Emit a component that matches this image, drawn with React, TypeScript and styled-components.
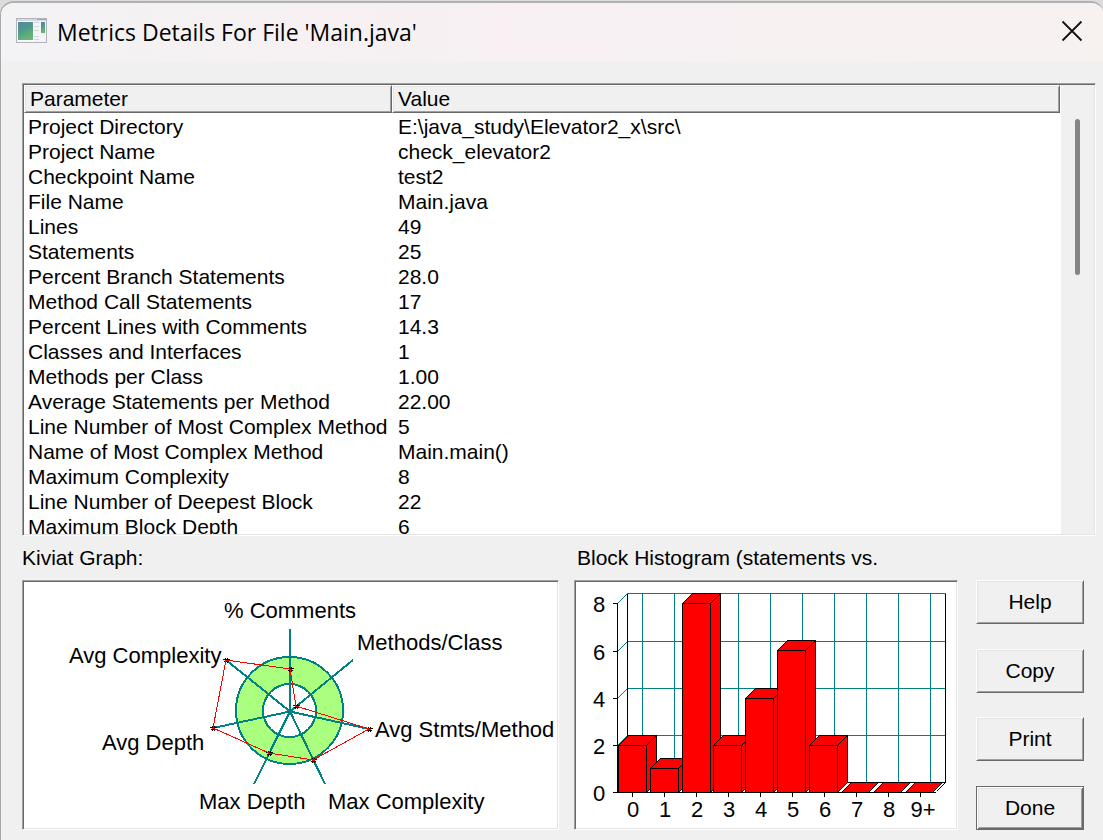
import React from 'react';
import styled, { createGlobalStyle, css } from 'styled-components';

const sans = '"Liberation Sans", Arial, sans-serif';

const GlobalStyle = createGlobalStyle`
  * { box-sizing: border-box; }
  body { margin: 0; background: #dcdcdc; }
`;

const sunken = css`
  border: 1px solid;
  border-color: #a0a0a0 #fff #fff #a0a0a0;
  box-shadow: inset 1px 1px #696969, inset -1px -1px #e3e3e3;
  padding: 1px;
`;

const raised = css`
  border: 1px solid;
  border-color: #fff #696969 #696969 #fff;
  box-shadow: inset 1px 1px #e3e3e3, inset -1px -1px #a0a0a0;
`;

const Screen = styled.div`
  height: 100vh;
  min-height: 600px;
  padding-top: 1px;
  display: flex;
`;

const Dialog = styled.main`
  flex: 1;
  min-width: 0;
  display: flex;
  flex-direction: column;
  background: #f0f0f0;
  border-top: 2px solid #b0b0b0;
  border-left: 1px solid #a8a8a8;
  border-radius: 14px 12px 0 0;
  overflow: hidden;
  font-family: ${sans};
  font-size: 21px;
  color: #000;
`;

const TitleBar = styled.header`
  flex: none;
  height: 58px;
  padding: 0 20px 2px 15px;
  display: flex;
  align-items: center;
  gap: 10px;
  background: linear-gradient(90deg, #f3f2f4, #f8f0f3 45%, #f7f1f0);
`;

const Title = styled.h1`
  flex: 1;
  margin: 0;
  padding-top: 2px;
  font: 400 23px/30px "Open Sans", "Noto Sans", sans-serif;
`;

const CloseButton = styled.button`
  display: flex;
  padding: 0;
  border: 0;
  background: none;
`;

const Body = styled.div`
  flex: 1;
  min-height: 0;
  padding: 22px 7px 10px 21px;
  display: flex;
  flex-direction: column;
`;

const ListBox = styled.section`
  ${sunken}
  flex: 1;
  min-height: 0;
  display: flex;
  background: #fff;
`;

const ListView = styled.div`
  flex: 1;
  min-width: 0;
  overflow: hidden;
`;

const Table = styled.table`
  width: 100%;
  table-layout: fixed;
  border-collapse: separate;
  border-spacing: 0;
`;

const HeadCell = styled.th<{ $width?: number }>`
  ${raised}
  width: ${(p) => (p.$width ? `${p.$width}px` : 'auto')};
  height: 28px;
  padding: 0 5px;
  background: #f0f0f0;
  font-weight: 400;
  line-height: 26px;
  text-align: left;
`;

const Cell = styled.td`
  padding: 0 4px;
  line-height: 25px;
  white-space: nowrap;

  & + & { padding-left: 6px; }
  tr:first-child > & { padding-top: 1px; }
`;

const ScrollTrack = styled.div`
  flex: none;
  width: 33px;
  margin-left: 1px;
  padding-top: 34px;
  background: #f0f0f0;
`;

const ScrollThumb = styled.div`
  width: 5px;
  height: 156px;
  margin: 0 auto;
  border-radius: 3px;
  background: #858585;
`;

const Charts = styled.div`
  flex: none;
  display: flex;
  padding-right: 12px;
`;

const Figure = styled.figure<{ $share: number }>`
  flex: ${(p) => p.$share} 1 0;
  min-width: 0;
  margin: 0 15px 0 0;
`;

const Caption = styled.figcaption<{ $indent?: boolean }>`
  padding-left: ${(p) => (p.$indent ? '3px' : '0')};
  line-height: 44px;
  white-space: nowrap;
`;

const Panel = styled.div`
  ${sunken}
  height: 250px;
  background: #fff;
`;

const Chart = styled.svg`
  display: block;
  width: 100%;
  height: 246px;
  font-family: ${sans};
  font-size: 22px;
`;

const Buttons = styled.div`
  flex: none;
  width: 108px;
  margin: 44px 0 0 3px;
  display: flex;
  flex-direction: column;
  justify-content: space-between;
`;

const Button = styled.button<{ $default?: boolean }>`
  ${raised}
  height: 44px;
  padding: 0;
  background: #f0f0f0;
  color: #000;
  font: 400 21px/24px ${sans};
  ${(p) =>
    p.$default &&
    css`
      border-color: #696969;
      box-shadow: inset 1px 1px #fff, inset -1px -1px #696969, inset 2px 2px #e3e3e3,
        inset -2px -2px #a0a0a0;
    `}
`;

const rows: [string, string][] = [
  ['Project Directory', 'E:\\java_study\\Elevator2_x\\src\\'],
  ['Project Name', 'check_elevator2'],
  ['Checkpoint Name', 'test2'],
  ['File Name', 'Main.java'],
  ['Lines', '49'],
  ['Statements', '25'],
  ['Percent Branch Statements', '28.0'],
  ['Method Call Statements', '17'],
  ['Percent Lines with Comments', '14.3'],
  ['Classes and Interfaces', '1'],
  ['Methods per Class', '1.00'],
  ['Average Statements per Method', '22.00'],
  ['Line Number of Most Complex Method', '5'],
  ['Name of Most Complex Method', 'Main.main()'],
  ['Maximum Complexity', '8'],
  ['Line Number of Deepest Block', '22'],
  ['Maximum Block Depth', '6'],
];

interface Axis {
  label: string;
  text: [number, number];
  end: [number, number];
  value: [number, number];
}

const axes: Axis[] = [
  { label: '% Comments', text: [200, 36], end: [266, 47], value: [266, 87] },
  { label: 'Methods/Class', text: [333, 68], end: [329, 78], value: [272, 124] },
  { label: 'Avg Stmts/Method', text: [351, 155], end: [345, 147], value: [345, 147] },
  { label: 'Max Complexity', text: [304, 227], end: [301, 202], value: [289, 178] },
  { label: 'Max Depth', text: [175, 227], end: [230, 202], value: [245, 171] },
  { label: 'Avg Depth', text: [78, 168], end: [189, 146], value: [189, 146] },
  { label: 'Avg Complexity', text: [45, 81], end: [202, 78], value: [202, 78] },
];

function KiviatGraph() {
  return (
    <Chart viewBox="0 0 533 246" role="img" aria-label="Kiviat graph">
      <g shapeRendering="crispEdges" stroke="#008080" strokeWidth="2">
        <circle cx="265.5" cy="128.5" r="53.5" fill="#aaff7f" />
        <circle cx="265.5" cy="128.5" r="26.5" fill="#fff" />
        {axes.map((a) => (
          <line key={a.label} x1="266" y1="129.5" x2={a.end[0]} y2={a.end[1]} />
        ))}
      </g>
      {axes.map(({ label, value: [x, y] }) => (
        <path
          key={label}
          shapeRendering="crispEdges"
          d={`M${x - 3} ${y - 0.5}h7M${x - 2} ${y + 1.5}h5M${x - 0.5} ${y - 2}v5M${x + 1.5} ${y - 2}v5`}
          stroke="#000"
        />
      ))}
      <polygon
        points={axes.map((a) => a.value.join(',')).join(' ')}
        fill="none"
        stroke="#f00"
        shapeRendering="crispEdges"
      />
      {axes.map(({ label, value: [x, y] }) => (
        <rect key={label} x={x - 1} y={y} width="3" height="1" fill="#f00" />
      ))}
      {axes.map((a) => (
        <text key={a.label} x={a.text[0]} y={a.text[1]}>{a.label}</text>
      ))}
    </Chart>
  );
}

const BASE = 210.5;
const DEPTH = 10;
const bars = [
  { label: '0', x: 42.5, top: 163.5 },
  { label: '1', x: 74.5, top: 186.5 },
  { label: '2', x: 106.5, top: 21.5 },
  { label: '3', x: 137.5, top: 163.5 },
  { label: '4', x: 169.5, top: 116.5 },
  { label: '5', x: 201.5, top: 68.5 },
  { label: '6', x: 233.5, top: 163.5 },
  { label: '7', x: 265.5, top: BASE },
  { label: '8', x: 297.5, top: BASE },
  { label: '9+', x: 329.5, top: BASE },
];
const levels = [
  { label: '8', y: 21.5 },
  { label: '6', y: 69.5 },
  { label: '4', y: 116.5 },
  { label: '2', y: 163.5 },
  { label: '0', y: BASE },
];

function BlockHistogram() {
  return (
    <Chart viewBox="0 0 380 246" role="img" aria-label="Block histogram">
      <g shapeRendering="crispEdges" fill="none">
        <g stroke="#008080">
          {levels.slice(0, 4).map((l) => (
            <path key={l.label} d={`M41.5 ${l.y}l${DEPTH} ${-DEPTH}H369.5`} />
          ))}
          {bars.map((b, i) => (
            <path key={b.label} d={`M${66.5 + i * 32} 11.5V200.5`} />
          ))}
        </g>
        <g stroke="#000">
          <path d="M51.5 11.5V200.5H369.5V11.5M360.5 209.5l9 -9" />
          {levels.map((l) => (
            <path key={l.label} d={`M37 ${l.y}h5`} />
          ))}
          {bars.map((b, i) => (
            <path key={b.label} d={`M${56.5 + i * 32} 211v4`} />
          ))}
          {bars.map((b) => {
            const h = BASE - b.top;
            const w = h > 0 ? 28 : 27;
            return (
              <g key={b.label} fill="#f00">
                <path d={`M${b.x} ${b.top}l${DEPTH} ${-DEPTH}h${w}l${-DEPTH} ${DEPTH}z`} />
                {h > 0 && (
                  <>
                    <path d={`M${b.x + w} ${b.top}l${DEPTH} ${-DEPTH}v${h}l${-DEPTH} ${DEPTH}z`} />
                    <path d={`M${b.x} ${b.top}h${w}V${BASE}h${-w}z`} />
                  </>
                )}
              </g>
            );
          })}
          <path d="M41.5 21V210.5H360" />
        </g>
      </g>
      <g textAnchor="middle">
        {levels.map((l) => (
          <text key={l.label} x="23" y={l.y + 8}>{l.label}</text>
        ))}
        {bars.map((b, i) => (
          <text key={b.label} x={(b.label === '9+' ? 59 : 57) + i * 32} y="235">{b.label}</text>
        ))}
      </g>
    </Chart>
  );
}

function WindowIcon() {
  return (
    <svg width="31" height="26" viewBox="0 0 31 26" aria-hidden="true">
      <defs>
        <linearGradient id="pane" x1="0" y1="0" x2="0.4" y2="1">
          <stop offset="0" stopColor="#5581ab" />
          <stop offset="0.5" stopColor="#4f9a8b" />
          <stop offset="1" stopColor="#68b774" />
        </linearGradient>
      </defs>
      <rect x="0.5" y="0.5" width="30" height="24" fill="#f3f4f5" stroke="#b1b5bb" />
      <path d="M1 1.5h29M1 2.5h29" stroke="#d5dae0" />
      <path d="M21 1.5h9" stroke="#a5abb3" />
      <rect x="1.5" y="3.5" width="16" height="19" fill="url(#pane)" stroke="#fff" />
      <rect x="25" y="4" width="4" height="11" fill="url(#pane)" />
      <path d="M18 4.5h5M18 8.5h5M18 12.5h5M18 18.5h5M18 21.5h5" stroke="#d3d5d8" />
    </svg>
  );
}

export default function App() {
  return (
    <>
      <GlobalStyle />
      <Screen>
        <Dialog>
          <TitleBar>
            <WindowIcon />
            <Title>Metrics Details For File 'Main.java'</Title>
            <CloseButton aria-label="Close">
              <svg width="22" height="22" viewBox="0 0 22 22">
                <path d="M1.5 1.5l19 19M20.5 1.5l-19 19" stroke="#111" strokeWidth="1.8" />
              </svg>
            </CloseButton>
          </TitleBar>
          <Body>
            <ListBox>
              <ListView>
                <Table>
                  <thead>
                    <tr>
                      <HeadCell $width={368}>Parameter</HeadCell>
                      <HeadCell>Value</HeadCell>
                    </tr>
                  </thead>
                  <tbody>
                    {rows.map(([name, value]) => (
                      <tr key={name}>
                        <Cell>{name}</Cell>
                        <Cell>{value}</Cell>
                      </tr>
                    ))}
                  </tbody>
                </Table>
              </ListView>
              <ScrollTrack>
                <ScrollThumb />
              </ScrollTrack>
            </ListBox>
            <Charts>
              <Figure $share={537}>
                <Caption>Kiviat Graph:</Caption>
                <Panel>
                  <KiviatGraph />
                </Panel>
              </Figure>
              <Figure $share={384}>
                <Caption $indent>Block Histogram (statements vs.</Caption>
                <Panel>
                  <BlockHistogram />
                </Panel>
              </Figure>
              <Buttons>
                <Button>Help</Button>
                <Button>Copy</Button>
                <Button>Print</Button>
                <Button $default>Done</Button>
              </Buttons>
            </Charts>
          </Body>
        </Dialog>
      </Screen>
    </>
  );
}
